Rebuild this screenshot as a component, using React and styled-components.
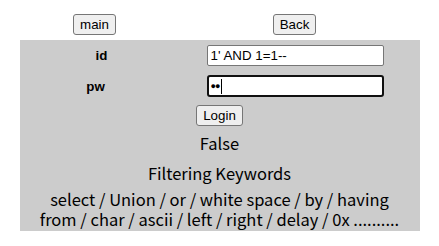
import React from 'react';
import styled, { createGlobalStyle } from 'styled-components';

const GlobalStyle = createGlobalStyle`
  body {
    margin: 8px;
    background: #ffffff;
    font-family: "Liberation Sans", Arial, sans-serif;
  }
`;

const Page = styled.div`
  width: 400px;
  margin: 0 auto;
`;

const TopBar = styled.div`
  display: grid;
  grid-template-columns: 200px 200px;
  padding: 6px 0 5px;
`;

const TopCell = styled.div`
  display: flex;
  justify-content: center;
  padding-right: 50px;
`;

const Button = styled.button`
  font-family: "Liberation Sans", Arial, sans-serif;
  font-size: 13.33px;
  height: 21px;
  padding: 0 6px;
  color: #000;
  background: #efefef;
  border: 1px solid #767676;
  border-radius: 3px;
`;

const Panel = styled.div`
  background: #cccccc;
  padding: 5px 0 2px;
  display: flex;
  flex-direction: column;
  align-items: center;
`;

const FieldRow = styled.div`
  width: 100%;
  display: grid;
  grid-template-columns: 187px 213px;
  align-items: center;
  height: 21px;
  margin-bottom: 9px;
`;

const Label = styled.div`
  font-weight: bold;
  font-size: 13.33px;
  text-align: center;
  padding-right: ${(p) => p.$shift || 0}px;
`;

const TextInput = styled.input`
  box-sizing: border-box;
  width: 177px;
  height: 21px;
  font-family: "Liberation Sans", Arial, sans-serif;
  font-size: 13.33px;
  padding: 1px 3px;
  border: 1px solid #767676;
  border-radius: 2px;
  background: #fff;
  color: #000;
  outline: none;
`;

const PwBox = styled.div`
  box-sizing: border-box;
  width: 177px;
  height: 22px;
  display: flex;
  align-items: center;
  padding: 0 2px;
  border: 2px solid #101010;
  border-radius: 3px;
  background: #fff;
  font-size: 9px;
  letter-spacing: -1px;
  color: #000;
`;

const Caret = styled.span`
  display: inline-block;
  width: 1px;
  height: 15px;
  background: #000;
  margin-left: 2px;
`;

const Message = styled.div`
  font-family: "Noto Sans CJK KR", "Noto Sans", sans-serif;
  font-size: 16.5px;
  line-height: 20px;
  color: #000;
  text-align: center;
  margin-top: ${(p) => p.$top || 0}px;
`;

export default function App() {
  return (
    <>
      <GlobalStyle />
      <Page>
        <TopBar>
          <TopCell>
            <Button>main</Button>
          </TopCell>
          <TopCell>
            <Button>Back</Button>
          </TopCell>
        </TopBar>
        <Panel>
          <FieldRow>
            <Label $shift={23}>id</Label>
            <TextInput defaultValue="1' AND 1=1--" readOnly />
          </FieldRow>
          <FieldRow>
            <Label $shift={35}>pw</Label>
            <PwBox>
              ●●
              <Caret />
            </PwBox>
          </FieldRow>
          <Button>Login</Button>
          <Message $top={7}>False</Message>
          <Message $top={10}>Filtering Keywords</Message>
          <Message $top={6}>
            select / Union / or / white space / by / having
            <br />
            from / char / ascii / left / right / delay / 0x ..........
          </Message>
        </Panel>
      </Page>
    </>
  );
}
